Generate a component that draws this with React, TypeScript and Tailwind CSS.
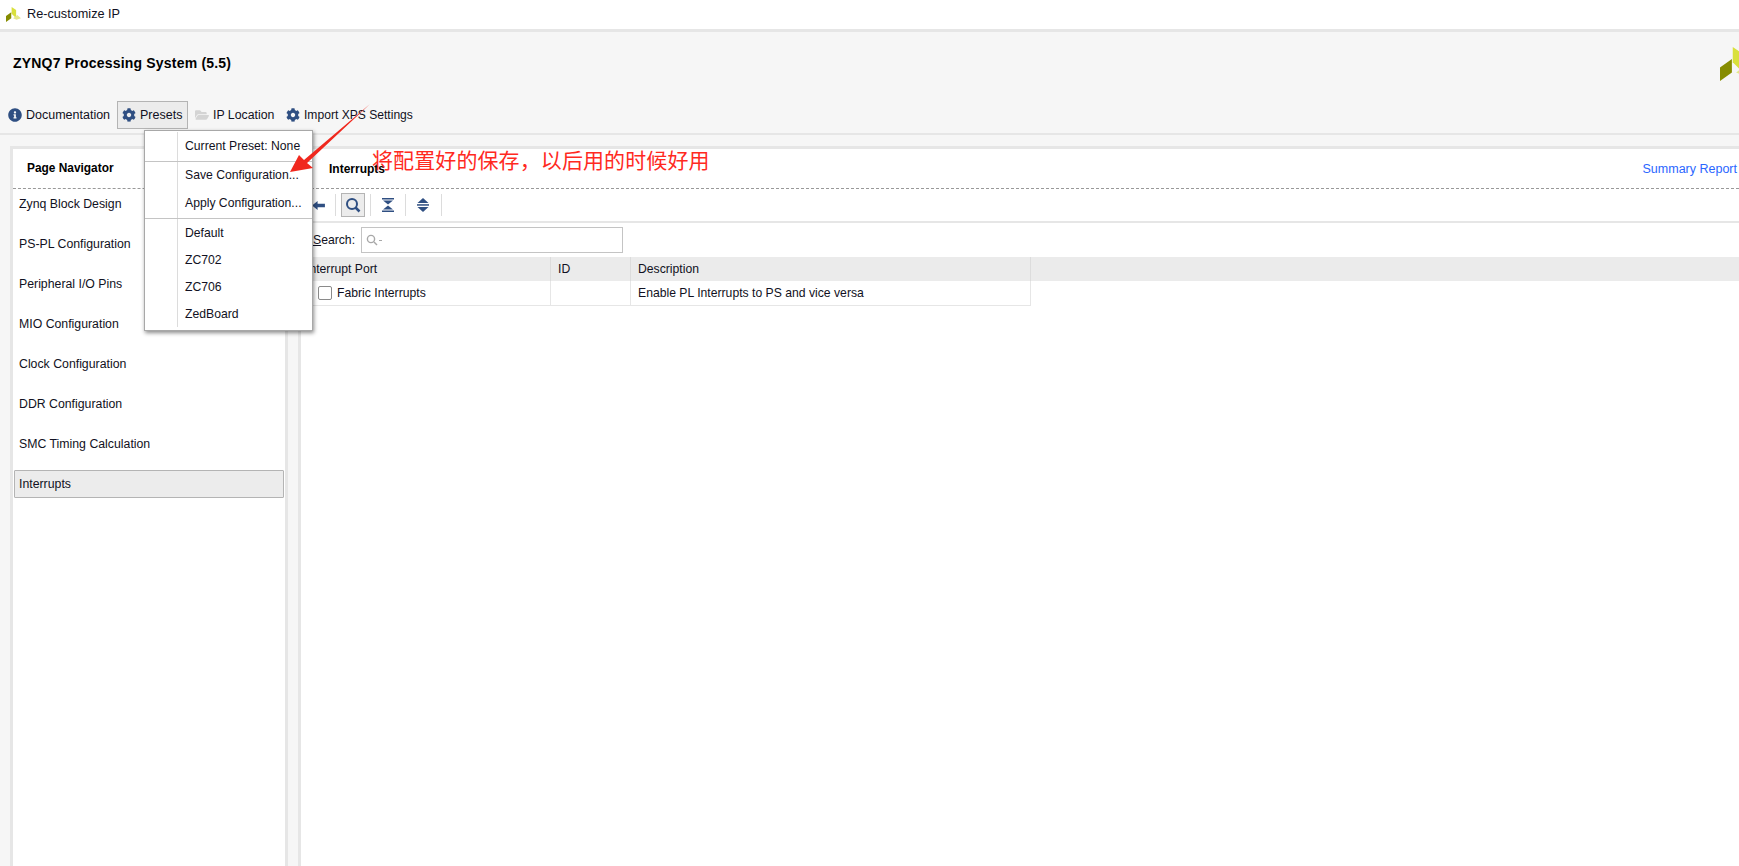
import { FaCog, FaFolderOpen, FaInfoCircle } from "react-icons/fa";

const navItems = [
  "Zynq Block Design",
  "PS-PL Configuration",
  "Peripheral I/O Pins",
  "MIO Configuration",
  "Clock Configuration",
  "DDR Configuration",
  "SMC Timing Calculation",
];

function XilinxMark({ className }: { className: string }) {
  return (
    <svg viewBox="0 0 40 40" className={className}>
      <polygon points="15,0 27,8 27,30 15,18" fill="#d9e03c" />
      <polygon points="0,24 14,14 14,30 0,40" fill="#868c00" />
      <polygon points="19,30 30,21 40,30 28,34" fill="#e4e88a" />
    </svg>
  );
}

function PresetMenu() {
  return (
    <div className="absolute left-[144px] top-[130px] z-10 w-[169px] border border-[#a8a8a8] bg-white pb-[3px] pt-px shadow-[1px_2px_4px_rgba(0,0,0,0.45)]">
      <div className="ml-[32px] border-l border-[#dcdcdc] pb-[2px] pl-[7px]">
        <div className="flex h-[27px] items-center pt-[2px]">Current Preset: None</div>
      </div>
      <div className="h-px bg-[#c4c4c4]" />
      <div className="ml-[32px] border-l border-[#dcdcdc] pb-[2px] pl-[7px]">
        <div className="flex h-[27px] items-center">Save Configuration...</div>
        <div className="flex h-[27px] items-center pt-[2px]">Apply Configuration...</div>
      </div>
      <div className="h-px bg-[#c4c4c4]" />
      <div className="ml-[32px] border-l border-[#dcdcdc] pl-[7px]">
        <div className="flex h-[27px] items-center pt-[2px]">Default</div>
        <div className="flex h-[27px] items-center pt-[2px]">ZC702</div>
        <div className="flex h-[27px] items-center pt-[2px]">ZC706</div>
        <div className="flex h-[27px] items-center pt-[2px]">ZedBoard</div>
      </div>
    </div>
  );
}

function ToolSep() {
  return <div className="h-[22px] w-px bg-[#dcdcdc]" />;
}

export default function App() {
  return (
    <div className="relative flex h-[866px] flex-col overflow-hidden bg-[#f6f6f6] font-['Liberation_Sans',sans-serif] text-[12.2px] text-[#111122]">
      <div className="flex h-[29px] items-center gap-[6px] bg-white pl-[6px]">
        <XilinxMark className="h-[15px] w-[15px]" />
        <span className="text-[12.7px]">Re-customize IP</span>
      </div>
      <div className="h-[3px] bg-[#e6e6e6]" />

      <div className="flex h-[101px] flex-col">
        <div className="flex h-[69px] items-start justify-between">
          <h1 className="mt-[21px] pl-[13px] text-[14px] font-bold tracking-[0.2px] text-black">ZYNQ7 Processing System (5.5)</h1>
          <div className="mt-[15px] h-[34px] w-[19px] overflow-hidden">
            <XilinxMark className="h-[34px] w-[34px] max-w-none" />
          </div>
        </div>
        <div className="flex h-[28px] items-center pl-[8px]">
          <FaInfoCircle className="h-[14px] w-[14px] text-[#2f4f82]" />
          <span className="ml-[4px] w-[91px] text-[12.5px]">Documentation</span>
          <div className="flex h-[28px] w-[71px] items-center gap-[4px] border border-[#b4b4b4] bg-[#ececec] pl-[4px]">
            <FaCog className="h-[14px] w-[14px] text-[#2f4f82]" />
            <span className="text-[12.5px]">Presets</span>
          </div>
          <FaFolderOpen className="ml-[7px] h-[14px] w-[14px] text-[#d4d4d4]" />
          <span className="ml-[4px] w-[73px] text-[12.3px]">IP Location</span>
          <FaCog className="h-[14px] w-[14px] text-[#2f4f82]" />
          <span className="ml-[4px] text-[12.1px]">Import XPS Settings</span>
        </div>
      </div>

      <div className="h-[2px] bg-[#e6e6e6]" />

      <div className="flex flex-1 gap-[10px] pl-[10px] pt-[11px]">
        <div className="flex w-[278px] flex-col border-[3px] border-b-0 border-[#e6e6e6] bg-white">
          <div className="flex h-[40px] items-center border-b border-dashed border-[#999999] pl-[14px] text-[11.9px] font-bold text-black">
            Page Navigator
          </div>
          <ul className="flex flex-col gap-[12px] pt-px text-[12.3px]">
            {navItems.map((item) => (
              <li key={item} className="flex h-[28px] items-center pl-[6px]">
                {item}
              </li>
            ))}
            <li className="mx-px flex h-[28px] items-center rounded-[1px] border border-[#b4b4b4] bg-[#ececec] pl-[4px]">
              Interrupts
            </li>
          </ul>
        </div>

        <div className="flex flex-1 flex-col border-[3px] border-b-0 border-r-0 border-[#e6e6e6] bg-white">
          <div className="flex h-[40px] items-center justify-between border-b border-dashed border-[#999999] pl-[28px] pr-[2px]">
            <span className="text-[12px] font-bold text-black">Interrupts</span>
            <span className="pt-[2px] text-[12.5px] text-[#2a66ff]">Summary Report</span>
          </div>
          <div className="flex h-[34px] items-center border-b-2 border-[#e6e6e6] pl-[11px]">
            <svg viewBox="0 0 14 12" className="h-[11px] w-[13px] text-[#2f4f82]" fill="currentColor">
              <polygon points="0,6 6,1 6,4 14,4 14,8 6,8 6,11" />
            </svg>
            <div className="ml-[10px]"><ToolSep /></div>
            <div className="ml-[5px] flex h-[24px] w-[24px] items-center justify-center border border-[#b4b4b4] bg-[#ececec]">
              <svg viewBox="0 0 16 16" className="h-[16px] w-[16px] text-[#2f4f82]" fill="none" stroke="currentColor">
                <circle cx="7" cy="7" r="5" strokeWidth="2" />
                <path d="M10.5 10.5 L14.5 14.5" strokeWidth="2.5" />
              </svg>
            </div>
            <div className="ml-[5px]"><ToolSep /></div>
            <svg viewBox="0 0 12 14" className="ml-[11px] h-[14px] w-[12px] text-[#2f4f82]" fill="currentColor">
              <rect x="0" y="0" width="12" height="1.5" />
              <polygon points="1,2.5 11,2.5 6,6.5" />
              <polygon points="1,11.5 11,11.5 6,7.5" />
              <rect x="0" y="12.5" width="12" height="1.5" />
            </svg>
            <div className="ml-[11px]"><ToolSep /></div>
            <svg viewBox="0 0 12 14" className="ml-[11px] h-[14px] w-[12px] text-[#2f4f82]" fill="currentColor">
              <polygon points="6,0 11.5,5 0.5,5" />
              <rect x="0" y="6.2" width="12" height="1.5" />
              <polygon points="6,14 11.5,9 0.5,9" />
            </svg>
            <div className="ml-[12px]"><ToolSep /></div>
          </div>
          <div className="mt-[4px] flex h-[26px] items-center pl-[12px]">
            <span className="w-[48px]"><span className="underline">S</span>earch:</span>
            <div className="flex h-[26px] w-[262px] items-center gap-px border border-[#c4c4c4] bg-white pl-[4px]">
              <svg viewBox="0 0 12 12" className="h-[12px] w-[12px] text-[#a8a8a8]" fill="none" stroke="currentColor" strokeWidth="1.4">
                <circle cx="5" cy="5" r="3.6" />
                <path d="M8 8 L11 11" />
              </svg>
              <div className="h-px w-[3px] bg-[#a8a8a8]" />
            </div>
          </div>
          <div className="mt-[4px] flex h-[24px] items-center bg-[#ebebeb]">
            <div className="flex h-full w-[250px] items-center border-r border-[#dcdcdc] pl-[5px]">Interrupt Port</div>
            <div className="flex h-full w-[80px] items-center border-r border-[#dcdcdc] pl-[7px]">ID</div>
            <div className="flex h-full w-[400px] items-center border-r border-[#dcdcdc] pl-[7px]">Description</div>
          </div>
          <div className="flex h-[25px] w-[730px] items-center border-b border-[#e6e6e6]">
            <div className="flex h-full w-[250px] items-center border-r border-[#e6e6e6] pl-[17px]">
              <div className="h-[14px] w-[14px] rounded-[2px] border border-[#8a8a8a] bg-white" />
              <span className="ml-[5px]">Fabric Interrupts</span>
            </div>
            <div className="h-full w-[80px] border-r border-[#e6e6e6]" />
            <div className="flex h-full w-[400px] items-center border-r border-[#e6e6e6] pl-[7px]">
              Enable PL Interrupts to PS and vice versa
            </div>
          </div>
        </div>
      </div>

      <PresetMenu />

      <div className="absolute left-[372px] top-[145px] z-20 font-['Noto_Sans_CJK_SC',sans-serif] text-[21px] leading-[28px] tracking-[0.1px] text-[#ff2a1f]">
        将配置好的保存，以后用的时候好用
      </div>

      <svg viewBox="0 0 1739 866" className="pointer-events-none absolute left-0 top-0 z-20 h-[866px] w-[1739px]">
        <polygon points="290,172 299,155 304,160 370,104 307,163 313,168" fill="#f0281e" />
      </svg>
    </div>
  );
}
